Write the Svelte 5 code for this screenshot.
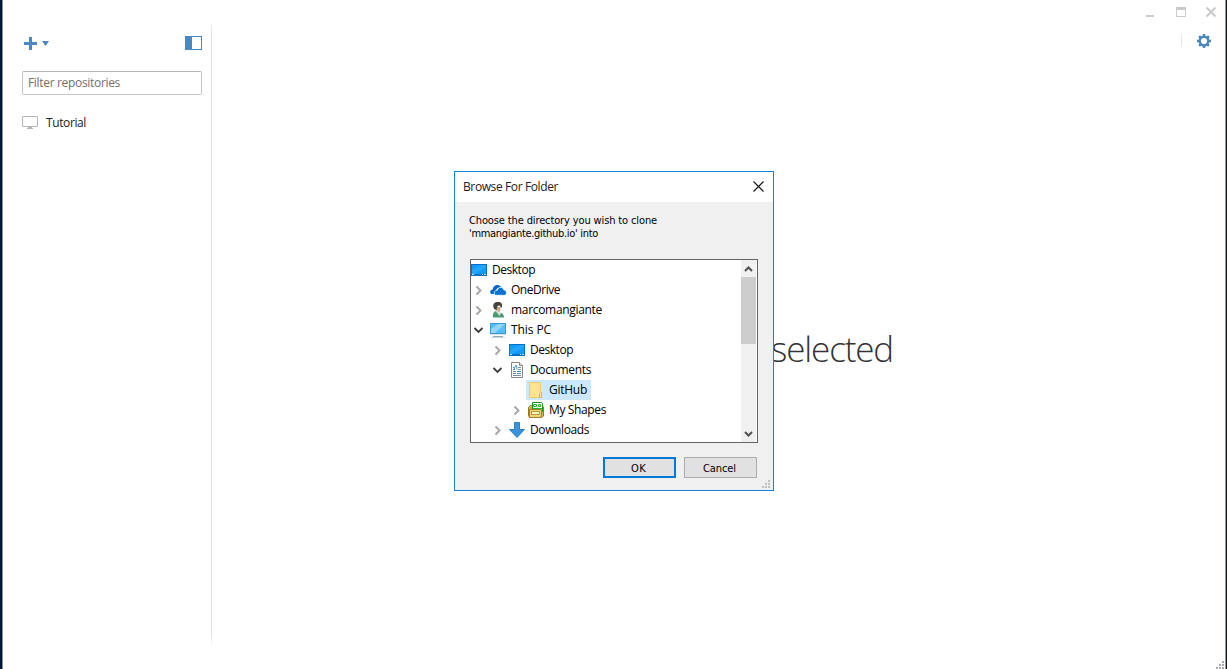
<script>
  const tree = [
    { name: 'Desktop', icon: 'desktop', level: 0, w: 43 },
    { name: 'OneDrive', icon: 'cloud', level: 1, toggle: 'closed', w: 49 },
    { name: 'marcomangiante', icon: 'user', level: 1, toggle: 'closed', w: 91 },
    { name: 'This PC', icon: 'pc', level: 1, toggle: 'open', w: 40 },
    { name: 'Desktop', icon: 'desktop', level: 2, toggle: 'closed', w: 43 },
    { name: 'Documents', icon: 'document', level: 2, toggle: 'open', w: 61 },
    { name: 'GitHub', icon: 'folder', level: 3, selected: true, w: 38 },
    { name: 'My Shapes', icon: 'shapes', level: 3, toggle: 'closed', w: 57 },
    { name: 'Downloads', icon: 'download', level: 2, toggle: 'closed', w: 59 }
  ];

  // Spreads or tightens the tracking so that a label fills its given width.
  function fit(node, width) {
    const range = document.createRange();
    range.selectNodeContents(node);
    const natural = range.getBoundingClientRect().width;
    node.style.letterSpacing = (width - natural) / node.textContent.length + 'px';
  }
</script>

{#snippet glyph(kind)}
  <svg class="glyph" width="17" height="16" viewBox="0 0 17 16">
    {#if kind === 'desktop'}
      <rect x="0" y="2" width="16" height="12" fill="#0870c8" />
      <rect x="1" y="3" width="14" height="9" fill="#139bfb" />
      <path d="M1 12V8L11 3h4v2L4 12z" fill="#30adff" opacity=".6" />
      <path d="M1 12.500h2M11 12.500h1M13 12.500h2" stroke="#bce4ff" />
    {:else if kind === 'cloud'}
      <path d="M1 12C-.8 9.600 1 7.500 2.600 7.500 3 3.200 7.800 1.200 11.300 4.600L7 6.500 4.500 12z" fill="#0a67c6" />
      <path d="M5.500 13.300C3 12 4.500 8 7.200 8.300 8.200 4.300 13 4.500 13.800 7.800c3.500.3 3.200 5.200.7 5.500z" fill="#0873d2" stroke="#fff" stroke-width=".8" />
    {:else if kind === 'user'}
      <path d="M3 15.500C2.500 11.500 4 9.500 6.500 8.500l2.500 3 2-.5c2 .5 3 2.200 3 4.500z" fill="#4c9a73" />
      <path d="M5.500 9l4 5 1.500-3-2-2z" fill="#d5e1d2" />
      <path d="M6 5h4.500v3L9 10 6 8z" fill="#cba88a" />
      <path d="M3.500 5.500C2.500 2 4.500 0 8 0s4.500 2 4 5l-1 1-1-2.500L7.500 4 6.500 8C5 8 4 7 3.500 5.500z" fill="#4c423c" />
    {:else if kind === 'pc'}
      <rect x=".5" y="1.500" width="15" height="10" fill="#55bdfa" stroke="#3b9ad5" />
      <path d="M1 11V7L8 2h7L5 11z" fill="#91d6ff" />
      <path d="M0 12.500h16" stroke="#d8e5ee" />
      <path d="M3 14.500h10" stroke="#8fa9b8" />
      <path d="M1 15.500h14" stroke="#c9d8e1" />
    {:else if kind === 'document'}
      <path d="M2.500.5h8l3 3v12h-11z" fill="#fff" stroke="#868686" />
      <path d="M10.500.5v3h3" fill="#eee" stroke="#868686" />
      <path d="M4 7.500h2M4 5.500h1" stroke="#2684bd" />
      <path d="M5 7.500l1.500-4h1l.5 4" fill="none" stroke="#439bcb" />
      <path d="M9 5.500h3M9 7.500h3M4 9.500h3M4 11.500h3M9 11.500h3M4 13.500h8" stroke="#7f8f99" />
      <path d="M8 9.500h4M8 11.500h1" stroke="#2684bd" />
    {:else if kind === 'folder'}
      <path d="M1.500 .5h11v9l1 1v5h-12z" fill="#ffe391" stroke="#edcc6c" />
      <path d="M11.500 15.500v-4l1-1h1v5z" fill="#fce79a" stroke="#d8b353" />
    {:else if kind === 'shapes'}
      <path d="M.5 5.500l2-2h11l2 1.500v9l-2 1.500h-12l-1-2z" fill="#d5b04b" stroke="#9b7624" />
      <path d="M4.500.5h9l1 1v8h-10z" fill="#fff" stroke="#159523" />
      <path d="M5.500 2.500h3v2h-3zM10.500 2.500h2v2h-2zM5 6.500h9" fill="#fff" stroke="#26b52c" />
      <path d="M1.500 7.500h12v6l-1 2h-11z" fill="#ecd77c" stroke="#a87e2b" />
      <rect x="3.500" y="9.500" width="8" height="3" fill="#fff6bf" stroke="#b89a3c" />
    {:else}
      <path d="M5.500.5h5v7h5L8 15.500.5 7.500h5z" fill="#3794dc" stroke="#2c83c6" />
    {/if}
  </svg>
{/snippet}

<div class="desktop">
  <div class="window">
    <aside>
      <div class="tools">
        <svg width="27" height="15" viewBox="0 0 27 15">
          <path d="M2 7.500h13M8.500 1v13" stroke="#4a88c2" stroke-width="3" />
          <path d="M20 5h7l-3.500 5z" fill="#4a88c2" />
        </svg>
        <svg width="17" height="14" viewBox="0 0 17 14">
          <rect x=".5" y=".5" width="16" height="13" fill="#fff" stroke="#4a88c2" />
          <rect width="7" height="14" fill="#4a88c2" />
        </svg>
      </div>
      <div class="filter"><span use:fit={92}>Filter repositories</span></div>
      <div class="repo">
        <svg width="16" height="13" viewBox="0 0 16 13">
          <rect x=".5" y=".5" width="15" height="10" rx=".5" fill="#fff" stroke="#b5b5b5" />
          <path d="M6 11h4v1h1v1H5v-1h1z" fill="#b5b5b5" />
        </svg>
        <span use:fit={40}>Tutorial</span>
      </div>
    </aside>
    <div class="rule"></div>
    <main>
      <header>
        <svg class="controls" width="70" height="12" viewBox="0 0 70 12">
          <path d="M0 9h8" stroke="#cacaca" stroke-width="2" />
          <path d="M30.500 1v8.500h9V1" fill="none" stroke="#cacaca" />
          <path d="M30 1.500h10" stroke="#cacaca" stroke-width="3" />
          <path d="M60.500.5l9 9M69.500.5l-9 9" stroke="#c9c9c9" stroke-width="2" />
        </svg>
        <div class="settings">
          <i></i>
          <svg width="14" height="14" viewBox="-7 -7 14 14">
            <circle r="4.300" fill="none" stroke="#4a88c2" stroke-width="2.400" />
            <path d="M0-7v3M0 7V4M-7 0h3M7 0H4M-4.900-4.900l2 2M4.900 4.900l-2-2M4.900-4.900l-2 2M-4.900 4.900l2-2" stroke="#4a88c2" stroke-width="2.500" />
          </svg>
        </div>
      </header>
      <h1><span use:fit={122}>selected</span></h1>
    </main>
    <svg class="grip corner" width="8" height="8" viewBox="0 0 8 8"><path d="M6 0h2v2H6zM3 3h2v2H3zM6 3h2v2H6zM0 6h2v2H0zM3 6h2v2H3zM6 6h2v2H6z" fill="#aaa" /></svg>
  </div>

  <section class="dialog">
    <div class="title">
      <span use:fit={95}>Browse For Folder</span>
      <svg width="11" height="11" viewBox="0 0 11 11"><path d="M.5.5l10 10M10.500.5l-10 10" stroke="#111" stroke-width="1.100" /></svg>
    </div>
    <div class="body">
      <p><span use:fit={188}>Choose the directory you wish to clone</span><br /><span use:fit={129}>'mmangiante.github.io' into</span></p>
      <div class="tree">
        <div class="rows">
          {#each tree as item}
            <div class="row" style:padding-left="{Math.max(0, item.level - 1) * 19}px">
              {#if item.level > 0}
                <svg class="toggle" width="19" height="20" viewBox="0 0 19 20">
                  {#if item.toggle === 'closed'}
                    <path d="M5.500 6.500l4 4-4 4" fill="none" stroke="#a6a6a6" stroke-width="1.900" />
                  {:else if item.toggle === 'open'}
                    <path d="M3.500 8l4 4 4-4" fill="none" stroke="#404040" stroke-width="1.900" />
                  {/if}
                </svg>
              {/if}
              <div class="node" class:selected={item.selected}>
                {@render glyph(item.icon)}
                <span use:fit={item.w}>{item.name}</span>
              </div>
            </div>
          {/each}
        </div>
        <div class="scroll">
          <svg width="15" height="17" viewBox="0 0 15 17"><path d="M4 11l3.500-3.500L11 11" fill="none" stroke="#505050" stroke-width="2" /></svg>
          <div class="thumb"></div>
          <svg width="15" height="17" viewBox="0 0 15 17"><path d="M4 7l3.500 3.500L11 7" fill="none" stroke="#505050" stroke-width="2" /></svg>
        </div>
      </div>
      <div class="buttons">
        <button class="primary"><span use:fit={15}>OK</span></button>
        <button><span use:fit={33}>Cancel</span></button>
      </div>
    </div>
    <svg class="grip" width="8" height="8" viewBox="0 0 8 8"><path d="M6 0h2v2H6zM3 3h2v2H3zM6 3h2v2H6zM0 6h2v2H0zM3 6h2v2H3zM6 6h2v2H6z" fill="#bfbfbf" /></svg>
  </section>
</div>

<style>
  :global(body) { margin: 0; overflow: hidden; }
  * { box-sizing: border-box; }
  svg { display: block; flex: none; }
  span { white-space: nowrap; }
  .desktop {
    position: relative;
    width: 1227px;
    height: 669px;
    padding: 0 1px 0 2px;
    background: #001836;
    font: 12px/20px "Open Sans", "Noto Sans", sans-serif;
    color: #222;
  }
  .window {
    position: relative;
    display: flex;
    height: 669px;
    background: #fff;
    border-left: 1px solid #8e8e8e;
    border-right: 1px solid #9a9a9a;
  }
  aside { width: 208px; padding: 36px 9px 0 19px; }
  .tools { display: flex; justify-content: space-between; height: 35px; }
  .filter {
    height: 24px;
    padding: 1px 5px;
    border: 1px solid #c6c6c6;
    border-top-color: #b4b4b4;
    border-radius: 2px;
    color: #707070;
  }
  .repo { display: flex; align-items: center; gap: 8px; height: 20px; margin-top: 18px; }
  .repo svg { margin-bottom: 1px; }
  .rule {
    width: 1px;
    height: 628px;
    margin-top: 20px;
    background: linear-gradient(transparent, #dfdfdf 14px, #dfdfdf 614px, transparent);
  }
  main { flex: 1; }
  header { display: flex; flex-direction: column; align-items: flex-end; }
  .controls { margin: 7px 9px 0 0; }
  .settings { display: flex; align-items: center; gap: 15px; margin: 13px 14px 0 0; height: 18px; }
  .settings i { width: 1px; height: 18px; background: linear-gradient(transparent, #ddd, transparent); }
  h1 {
    margin: 272px 0 0 559px;
    font: 300 35px/54px "Open Sans", sans-serif;
    color: #333;
  }
  .dialog {
    position: absolute;
    left: 454px;
    top: 171px;
    width: 320px;
    height: 320px;
    background: #f0f0f0;
    border: 1px solid #1883d7;
    color: #000;
  }
  .title {
    display: flex;
    align-items: center;
    justify-content: space-between;
    height: 30px;
    padding: 0 9px 0 8px;
    background: #fff;
    color: #222;
  }
  .title svg { margin-bottom: 2px; }
  .body { padding: 12px 15px 0; }
  p { margin: 0 0 0 -1px; height: 45px; font: 11px/13px "DejaVu Sans Condensed", "DejaVu Sans", sans-serif; }
  .tree {
    display: flex;
    height: 184px;
    width: 288px;
    border: 1px solid #646464;
    background: #fff;
  }
  .rows { flex: 1; }
  .row { display: flex; height: 20px; }
  .node { display: flex; align-items: center; gap: 4px; height: 20px; padding: 0 4px 0 2px; margin-left: -2px; }
  .row:first-child .node { padding: 0; margin: 0; }
  .selected { background: #cce8ff; }
  .scroll { display: flex; flex-direction: column; width: 15px; margin-right: 1px; background: #f0f0f0; }
  .thumb { height: 67px; margin-bottom: auto; background: #cdcdcd; }
  .buttons { display: flex; justify-content: flex-end; gap: 8px; margin: 14px 1px 0 0; }
  button {
    display: flex;
    justify-content: center;
    align-items: center;
    width: 73px;
    height: 21px;
    padding: 2px 2px 0 0;
    border: 1px solid #adadad;
    background: #e1e1e1;
    color: #000;
    font: 11px/13px "DejaVu Sans Condensed", "DejaVu Sans", sans-serif;
  }
  .primary { border: 2px solid #0078d7; }
  .grip { position: absolute; right: 3px; bottom: 2px; }
  .corner { right: 1px; bottom: 0; }
</style>
